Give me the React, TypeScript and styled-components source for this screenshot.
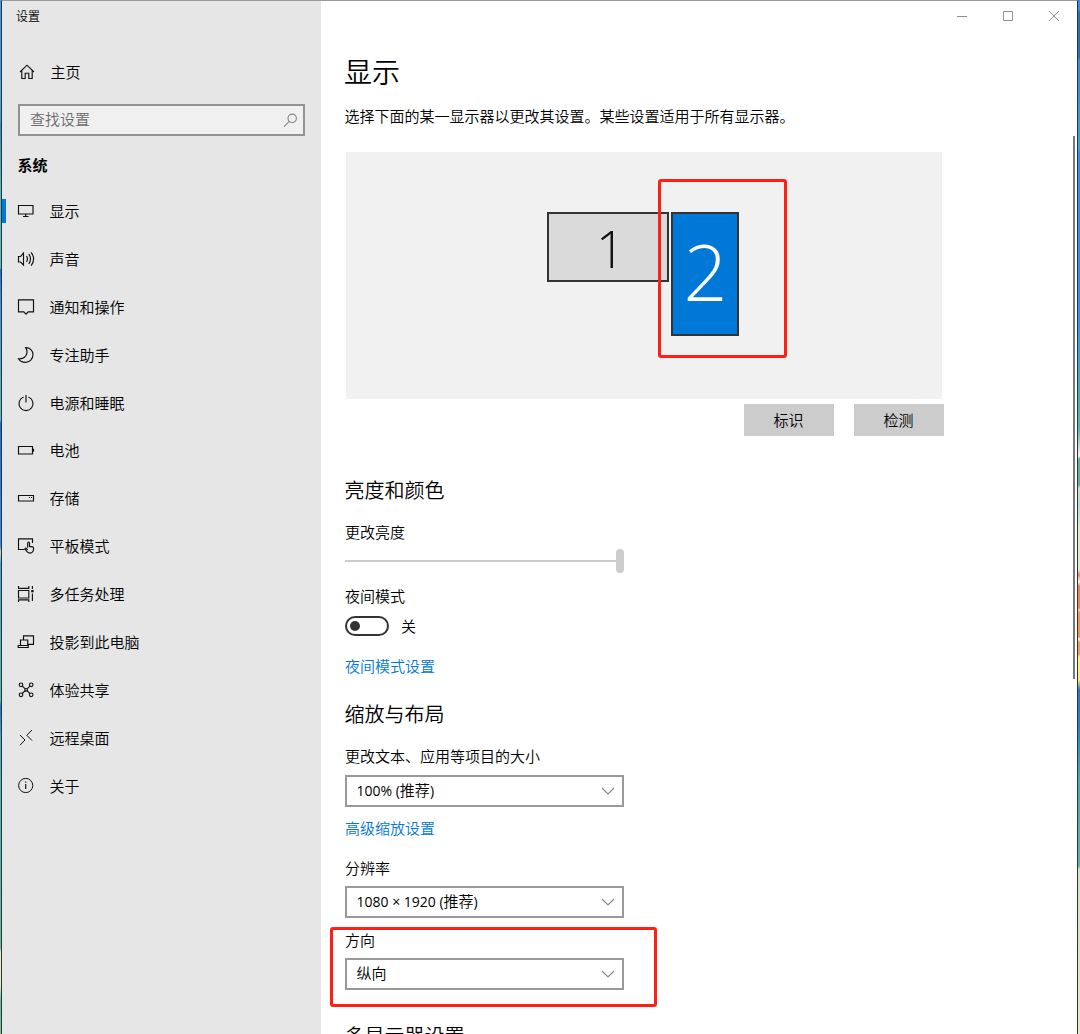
import React from "react";
import styled, { createGlobalStyle } from "styled-components";

const GlobalStyle = createGlobalStyle`
  * { box-sizing: border-box; }
  body {
    margin: 0;
    overflow: hidden;
    font-family: "Noto Sans CJK SC", sans-serif;
    font-size: 15px;
    font-weight: 350;
    color: #000;
  }
`;

const Desktop = styled.div`
  display: grid;
  grid-template-columns: 1px 1fr 2px;
  width: 1080px;
  height: 1034px;
  overflow: hidden;
`;

const LeftWallpaper = styled.div`
  background: linear-gradient(
    #3b9bf5 0, #3b9bf5 80px, #4bb0e0 81px, #3d9fd0 122px, #2f8fc0 124px, #55bcc8 190px,
    #55c0c0 268px, #1a6fe0 270px, #2f9be8 300px, #55c0c8 420px, #1a6fe0 423px, #2f8ff5 546px,
    #bfe0b0 552px, #40a8d8 564px, #50c0b8 700px, #1a78d8 706px, #48b0c8 740px, #60c0a0 948px,
    #e4f0c0 952px, #e4f0c0 985px, #60c0a0 1000px, #78c890 1034px
  );
`;

const RightWallpaper = styled.div`
  background: linear-gradient(
    #2f8ff0 0, #2f8ff0 10px, #2272b8 12px, #2272b8 57px, #2f8fe0 60px, #40a0d8 148px,
    #2f8ff0 154px, #2f8ff0 300px, #56b8b0 430px, #f0f8f0 456px, #56b8a4 459px, #56b8a4 485px,
    #c4e6c8 488px, #b0e0d0 505px, #d8efc8 528px, #d8efc8 570px, #f08848 575px, #ffffff 582px,
    #f08848 586px, #f08848 608px, #ffe0c0 610px, #f09850 612px, #f09850 637px, #ffffff 639px,
    #eca050 642px, #eca050 654px, #fff080 657px, #f8e888 680px, #2478c8 690px, #2488cc 730px,
    #48a8c0 780px, #58b8a8 866px, #cce6c8 869px, #d4e8c4 940px, #e6ebc0 1034px
  );
`;

const Window = styled.div`
  display: grid;
  grid-template-columns: 319px 1fr;
  height: 1034px;
  overflow: hidden;
  border: 1px solid #303438;
  border-top-color: #999;
  border-bottom: 0;
  background: #fff;
`;

const Sidebar = styled.nav`
  display: flex;
  flex-direction: column;
  background: #e6e6e6;
`;

const WindowTitle = styled.div`
  height: 30px;
  padding-left: 14px;
  font-size: 12px;
  line-height: 30px;
`;

const NavRow = styled.a<{ $home?: boolean }>`
  display: flex;
  align-items: center;
  flex: none;
  height: ${(p) => (p.$home ? "48px" : "47.9px")};
  margin-top: ${(p) => (p.$home ? "17px" : "0")};
  padding-left: ${(p) => (p.$home ? "16px" : "0")};
  gap: ${(p) => (p.$home ? "14.5px" : "0")};
  line-height: 22px;
`;

const Marker = styled.span<{ $active: boolean }>`
  width: 4px;
  height: 24px;
  margin-right: 11px;
  background: ${(p) => (p.$active ? "#0078d7" : "transparent")};
`;

const NavIcon = styled.svg`
  display: block;
  flex: none;
  width: 18px;
  height: 18px;
  fill: none;
  stroke: #111;
  stroke-width: 1.15;
`;

const NavLabel = styled.span<{ $gap?: number }>`
  margin-left: ${(p) => p.$gap ?? 0}px;
`;

const SearchBox = styled.div`
  display: flex;
  align-items: center;
  justify-content: space-between;
  flex: none;
  width: 287px;
  height: 32px;
  margin: 8px 0 0 16px;
  padding: 0 5px 2px 10px;
  border: 2px solid #929292;
  background: #f0f0f0;
  color: #6b6b6b;
  line-height: 22px;
`;

const SearchIcon = styled.svg`
  width: 15px;
  height: 15px;
  margin-top: 2px;
  fill: none;
  stroke: #858585;
  stroke-width: 1.15;
`;

const Category = styled.div`
  height: 22px;
  margin: 18px 0 11px 15.5px;
  font-weight: 700;
  line-height: 22px;
`;

const Main = styled.main`
  display: grid;
  grid-template-rows: 30px 1fr;
  grid-template-columns: 1fr 4px;
  min-width: 0;
  overflow: hidden;
`;

const CaptionBar = styled.div`
  grid-column: 1 / -1;
  display: flex;
  justify-content: flex-end;
  align-items: center;
  gap: 28px;
  padding-right: 14px;
`;

const CaptionIcon = styled.svg`
  width: 18px;
  height: 18px;
  fill: none;
  stroke: #909090;
  stroke-width: 1;
`;

const Page = styled.div`
  display: flex;
  flex-direction: column;
  align-items: flex-start;
  padding-left: 24px;
  height: 1003px;
  overflow: hidden;
  & > * { flex: none; }
`;

const ScrollTrack = styled.div`
  padding-top: 105px;
`;

const ScrollThumb = styled.div`
  width: 2px;
  height: 543px;
  background: #76797c;
`;

const PageTitle = styled.h1`
  height: 36px;
  margin: 22px 0 0 -1px;
  font-size: 28px;
  font-weight: 350;
  line-height: 36px;
`;

const Description = styled.p`
  height: 20px;
  margin: 17px 0 0 -0.5px;
  line-height: 20px;
  white-space: nowrap;
`;

const Canvas = styled.div`
  position: relative;
  width: 596px;
  height: 247px;
  margin: 26px 0 0 1px;
  background: #f1f1f1;
`;

const Monitor = styled.div<{ $x: number; $y: number; $w: number; $h: number; $selected?: boolean }>`
  position: absolute;
  left: ${(p) => p.$x}px;
  top: ${(p) => p.$y}px;
  display: flex;
  align-items: center;
  justify-content: center;
  width: ${(p) => p.$w}px;
  height: ${(p) => p.$h}px;
  padding: ${(p) => (p.$selected ? "0 0 5px 1px" : "2px 0 0 5px")};
  border: 2px solid #333;
  background: ${(p) => (p.$selected ? "#0078d7" : "#dadada")};
  color: ${(p) => (p.$selected ? "#fff" : "#111")};
  font-family: "Open Sans", sans-serif;
  font-size: ${(p) => (p.$selected ? 77 : 51)}px;
  font-weight: 300;
  line-height: 1;
`;

const CanvasHighlight = styled.div`
  position: absolute;
  left: 312px;
  top: 27px;
  width: 129px;
  height: 179px;
  border: 3px solid #ff2015;
  border-radius: 3px;
`;

const ButtonRow = styled.div`
  display: flex;
  justify-content: flex-end;
  gap: 20px;
  width: 598.5px;
  margin-top: 5px;
`;

const Button = styled.button`
  width: 90px;
  height: 32px;
  padding: 0;
  border: 0;
  background: #ccc;
  color: #000;
  font: inherit;
  line-height: 32px;
`;

const SectionTitle = styled.h2<{ $top: number }>`
  height: 28px;
  margin: ${(p) => p.$top}px 0 0 -0.5px;
  font-size: 20px;
  font-weight: 350;
  line-height: 28px;
`;

const Label = styled.div<{ $top: number }>`
  height: 20px;
  margin-top: ${(p) => p.$top}px;
  line-height: 20px;
`;

const Link = styled.a<{ $top: number }>`
  height: 20px;
  margin-top: ${(p) => p.$top}px;
  color: #0078d7;
  line-height: 20px;
`;

const Slider = styled.div`
  display: flex;
  align-items: center;
  width: 279px;
  height: 24px;
  margin-top: 7px;
`;

const SliderTrack = styled.div`
  flex: 1;
  height: 2px;
  background: #ccc;
`;

const SliderThumb = styled.div`
  width: 8px;
  height: 24px;
  border-radius: 4px;
  background: #ccc;
`;

const ToggleRow = styled.div`
  display: flex;
  align-items: center;
  gap: 12px;
  height: 20px;
  margin-top: 10px;
  line-height: 20px;
`;

const Toggle = styled.div`
  display: flex;
  align-items: center;
  width: 44px;
  height: 20px;
  padding-left: 3px;
  border: 2px solid #333;
  border-radius: 10px;
`;

const Knob = styled.div`
  width: 10px;
  height: 10px;
  border-radius: 50%;
  background: #333;
`;

const Select = styled.div<{ $top: number }>`
  display: flex;
  align-items: center;
  justify-content: space-between;
  width: 279px;
  height: 32px;
  margin-top: ${(p) => p.$top}px;
  padding: 0 7px 2px 9.5px;
  border: 2px solid #999;
  line-height: 20px;
`;

const Latin = styled.span`
  font-family: "Open Sans", sans-serif;
  font-size: 14px;
  font-weight: 400;
  white-space: pre;
`;

const Chevron = styled.svg`
  width: 14px;
  height: 8px;
  margin-top: 2px;
  fill: none;
  stroke: #888;
  stroke-width: 1.2;
`;

const Field = styled.div`
  position: relative;
  display: flex;
  flex-direction: column;
  align-items: flex-start;
`;

const FieldHighlight = styled.div`
  position: absolute;
  left: -15px;
  top: 9px;
  width: 327px;
  height: 80px;
  border: 3px solid #ff2015;
  border-radius: 3px;
`;

const items: { label: string; icon: React.ReactNode }[] = [
  {
    label: "显示",
    icon: <path d="M1.5 3.5H16v8.5H1.5zM8.7 12v2.3M6 14.5h5.5" />,
  },
  {
    label: "声音",
    icon: <path d="M1.5 6.5H3.5L6.5 3v12L3.5 12H1.5zM9.5 6.2q2 2.8 0 5.6M11.8 4.2q3.4 4.8 0 9.6M14.1 2.3q5 6.7 0 13.4" />,
  },
  { label: "通知和操作", icon: <path d="M1.5 1.8H16.5V13.8H11.2L9 16.2 6.8 13.8H1.5z" /> },
  {
    label: "专注助手",
    icon: <path d="M8.7 1.6C13 1.5 16 4.6 16 8.6 16 13 12.7 16.4 8.4 16.4 5.4 16.4 2.8 15 1.5 12.8 6.5 13.3 9.8 10.4 10 6.4 10.1 4.5 9.6 2.9 8.7 1.6z" />,
  },
  { label: "电源和睡眠", icon: <path d="M6.6 3A7 7 0 1 0 11.4 3M9 1v7.5" /> },
  { label: "电池", icon: <path d="M1.5 5.5H15.5v7.5H1.5zM16.5 7.7v3" /> },
  { label: "存储", icon: <path d="M1.5 6.5H16.5v5.5H1.5zM12 8.5h1M14 8.5h1" /> },
  {
    label: "平板模式",
    icon: (
      <>
        <path d="M7.8 12.5H1.5V1.8H15.5V6" />
        <path d="M10.7 10.8V6q0-1 .9-1t.9 1v3.4l3 .5q1.3.3 1.1 1.8-.3 4.2-3.6 4.4-2.4 0-3.4-2L8.2 12.2q-.4-1 .4-1.2.7 0 2.1 1.8" />
      </>
    ),
  },
  {
    label: "多任务处理",
    icon: (
      <>
        <path d="M1.5 1V3.3H11.8V1M1.5 5.5H11.8v7.5H1.5zM1.5 17V14.9H11.8V17M15.4 1v3M15.4 8.5V16" />
        <path d="M14.2 5h2.4v2.3h-2.4z" fill="#111" stroke="none" />
      </>
    ),
  },
  {
    label: "投影到此电脑",
    icon: <path d="M6.5 7V2.8H16.5v8.5H11.2M3.5 12.2V7h7.2v5.2M1.2 12.5H11.2v2H1.2z" />,
  },
  {
    label: "体验共享",
    icon: (
      <>
        <circle cx="4" cy="3.8" r="1.8" />
        <circle cx="14.2" cy="3.8" r="1.8" />
        <circle cx="4" cy="13.8" r="1.8" />
        <circle cx="14.2" cy="13.8" r="1.8" />
        <circle cx="9.1" cy="8.8" r="1.3" />
        <path d="M5.3 5.1 8.2 7.9M12.9 5.1 10 7.9M5.3 12.5 8.2 9.7M12.9 12.5 10 9.7" />
      </>
    ),
  },
  { label: "远程桌面", icon: <path d="M3 6 8 11 3 16.2M15 1 9.8 6.3 15 11.5" strokeWidth="1" /> },
  {
    label: "关于",
    icon: (
      <>
        <circle cx="8.7" cy="8.5" r="7.1" strokeWidth="1" />
        <path d="M8.7 7.1v5M8.7 4.6v1.2" />
      </>
    ),
  },
];

const Arrow = () => (
  <Chevron viewBox="0 0 14 8">
    <path d="M1 1 7 7 13 1" />
  </Chevron>
);

export default function App() {
  return (
    <>
      <GlobalStyle />
      <Desktop>
        <LeftWallpaper />
        <Window>
          <Sidebar>
            <WindowTitle>设置</WindowTitle>
            <NavRow $home>
              <NavIcon viewBox="0 0 18 18">
                <path d="M2 9 9 2.2 16 9M3.8 7.5V15.5H7.2V10.2H10.8V15.5H14.2V7.5" />
              </NavIcon>
              <NavLabel>主页</NavLabel>
            </NavRow>
            <SearchBox>
              <span>查找设置</span>
              <SearchIcon viewBox="0 0 15 15">
                <circle cx="9.2" cy="5.3" r="4.2" />
                <path d="M6.2 8.3 1 13.7" />
              </SearchIcon>
            </SearchBox>
            <Category>系统</Category>
            {items.map((item, i) => (
              <NavRow key={item.label}>
                <Marker $active={i === 0} />
                <NavIcon viewBox="0 0 18 18">{item.icon}</NavIcon>
                <NavLabel $gap={14.5}>{item.label}</NavLabel>
              </NavRow>
            ))}
          </Sidebar>
          <Main>
            <CaptionBar>
              <CaptionIcon viewBox="0 0 18 18">
                <path d="M4 9.5H14" />
              </CaptionIcon>
              <CaptionIcon viewBox="0 0 18 18">
                <path d="M4.5 4.5H13.5V13.5H4.5z" />
              </CaptionIcon>
              <CaptionIcon viewBox="0 0 18 18">
                <path d="M4 4 14 14M14 4 4 14" />
              </CaptionIcon>
            </CaptionBar>
            <Page>
              <PageTitle>显示</PageTitle>
              <Description>选择下面的某一显示器以更改其设置。某些设置适用于所有显示器。</Description>
              <Canvas>
                <Monitor $x={201} $y={60} $w={122} $h={70}>1</Monitor>
                <Monitor $x={325} $y={60} $w={68} $h={124} $selected>2</Monitor>
                <CanvasHighlight />
              </Canvas>
              <ButtonRow>
                <Button>标识</Button>
                <Button>检测</Button>
              </ButtonRow>

              <SectionTitle $top={40}>亮度和颜色</SectionTitle>
              <Label $top={18}>更改亮度</Label>
              <Slider>
                <SliderTrack />
                <SliderThumb />
              </Slider>
              <Label $top={13}>夜间模式</Label>
              <ToggleRow>
                <Toggle>
                  <Knob />
                </Toggle>
                <span>关</span>
              </ToggleRow>
              <Link $top={20}>夜间模式设置</Link>

              <SectionTitle $top={24}>缩放与布局</SectionTitle>
              <Label $top={18}>更改文本、应用等项目的大小</Label>
              <Select $top={9}>
                <span><Latin>100% (</Latin>推荐<Latin>)</Latin></span>
                <Arrow />
              </Select>
              <Link $top={11}>高级缩放设置</Link>
              <Label $top={20}>分辨率</Label>
              <Select $top={8}>
                <span><Latin>1080 × 1920 (</Latin>推荐<Latin>)</Latin></span>
                <Arrow />
              </Select>
              <Field>
                <Label $top={12}>方向</Label>
                <Select $top={8}>
                  <span>纵向</span>
                  <Arrow />
                </Select>
                <FieldHighlight />
              </Field>
              <SectionTitle $top={32}>多显示器设置</SectionTitle>
            </Page>
            <ScrollTrack>
              <ScrollThumb />
            </ScrollTrack>
          </Main>
        </Window>
        <RightWallpaper />
      </Desktop>
    </>
  );
}
